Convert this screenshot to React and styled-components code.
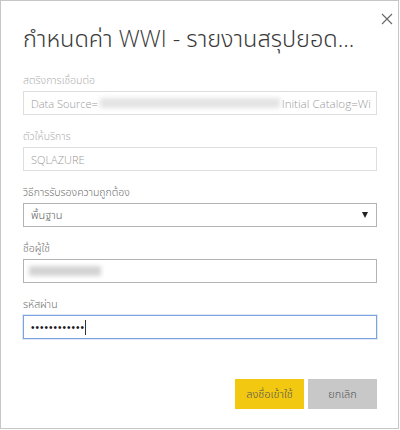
import React from "react";
import styled, { createGlobalStyle } from "styled-components";

const Global = createGlobalStyle`
  html, body { margin: 0; padding: 0; background: #ffffff; }
  body { font-family: "Open Sans", "Noto Sans Thai", "Noto Sans", sans-serif; }
  * { box-sizing: border-box; }
`;

const Dialog = styled.div`
  position: relative;
  width: 399px;
  height: 429px;
  border: 1px solid #c6c6c6;
  background: #fff;
  padding: 0 21px 0 22px;
  display: flex;
  flex-direction: column;
`;

const Close = styled.button`
  position: absolute;
  top: 12px;
  right: 5px;
  width: 12px;
  height: 12px;
  padding: 0;
  border: none;
  background: none;
  display: flex;
`;

const Title = styled.h1`
  margin: 19px 0 0 0;
  width: 334px;
  height: 36px;
  font-family: "Open Sans", "Noto Sans Thai", sans-serif;
  font-weight: 300;
  font-size: 23.5px;
  line-height: 36px;
  color: #3a3a3a;
  white-space: nowrap;
`;

const Form = styled.div`
  margin-top: 16px;
  display: flex;
  flex-direction: column;
  gap: 13px;
`;

const Field = styled.div`
  display: flex;
  flex-direction: column;
`;

const Label = styled.label`
  font-size: 10.5px;
  line-height: 16px;
  height: 16px;
  margin-bottom: 3px;
  font-weight: 300;
  color: ${(p) => (p.$disabled ? "#b0b0b0" : "#707070")};
  font-family: "Open Sans", "Noto Sans Thai", sans-serif;
`;

const Box = styled.div`
  height: 24px;
  border: 1px solid ${(p) => (p.$focus ? "#7aa3e0" : p.$disabled ? "#dedede" : "#b3b3b3")};
  box-shadow: ${(p) => (p.$focus ? "0 0 0 1px rgba(122,163,224,0.25)" : "none")};
  padding: 0 ${(p) => p.$pl ?? 7}px;
  display: flex;
  align-items: center;
  overflow: hidden;
  white-space: nowrap;
  font-size: 11px;
  font-weight: 300;
  color: ${(p) => (p.$disabled ? "#9a9a9a" : "#606060")};
  font-family: "Open Sans", "Noto Sans Thai", sans-serif;
`;

const Catalog = styled.span`
  font-size: 11.6px;
`;

const Blur = styled.span`
  display: inline-block;
  width: ${(p) => p.$w}px;
  height: 10px;
  background: ${(p) => p.$c || "#e4e4e4"};
  filter: blur(2px);
  margin: 0 ${(p) => p.$m || 0}px;
  flex-shrink: 0;
`;

const Arrow = styled.span`
  margin-left: auto;
  width: 0;
  height: 0;
  border-left: 3.5px solid transparent;
  border-right: 3.5px solid transparent;
  border-top: 6px solid #222;
  margin-right: 1px;
`;

const Dots = styled.span`
  font-size: 10px;
  letter-spacing: 1px;
  color: #1a1a1a;
  font-family: "Liberation Sans", Arial, sans-serif;
  font-weight: 400;
`;

const Caret = styled.span`
  display: inline-block;
  width: 1px;
  height: 15px;
  background: #333;
  margin-left: 0;
`;

const Actions = styled.div`
  margin-top: 40px;
  display: flex;
  justify-content: flex-end;
  gap: 4px;
`;

const Button = styled.button`
  width: 69px;
  height: 30px;
  border: none;
  background: ${(p) => (p.$primary ? "#f2c811" : "#c8c8c8")};
  color: #555;
  font-size: 11px;
  font-weight: 300;
  font-family: "Open Sans", "Noto Sans Thai", sans-serif;
  padding: 0;
`;

export default function App() {
  return (
    <>
      <Global />
      <Dialog>
        <Close aria-label="close">
          <svg width="12" height="12" viewBox="0 0 12 12">
            <path d="M1 1 L11 11 M11 1 L1 11" stroke="#666" strokeWidth="1.1" fill="none" />
          </svg>
        </Close>
        <Title>กำหนดค่า WWI - รายงานสรุปยอด...</Title>
        <Form>
          <Field>
            <Label $disabled>สตริงการเชื่อมต่อ</Label>
            <Box $disabled $pl={7}>
              Data Source=<Blur $w={180} $m={2} />
              <Catalog>Initial Catalog=Wi</Catalog>
            </Box>
          </Field>
          <Field>
            <Label $disabled>ตัวให้บริการ</Label>
            <Box $disabled>SQLAZURE</Box>
          </Field>
          <Field>
            <Label>วิธีการรับรองความถูกต้อง</Label>
            <Box>
              พื้นฐาน
              <Arrow />
            </Box>
          </Field>
          <Field>
            <Label>ชื่อผู้ใช้</Label>
            <Box $pl={5}>
              <Blur $w={72} $c="#d4d4d4" />
            </Box>
          </Field>
          <Field>
            <Label>รหัสผ่าน</Label>
            <Box $focus>
              <Dots>••••••••••••</Dots>
              <Caret />
            </Box>
          </Field>
        </Form>
        <Actions>
          <Button $primary>ลงชื่อเข้าใช้</Button>
          <Button>ยกเลิก</Button>
        </Actions>
      </Dialog>
    </>
  );
}
